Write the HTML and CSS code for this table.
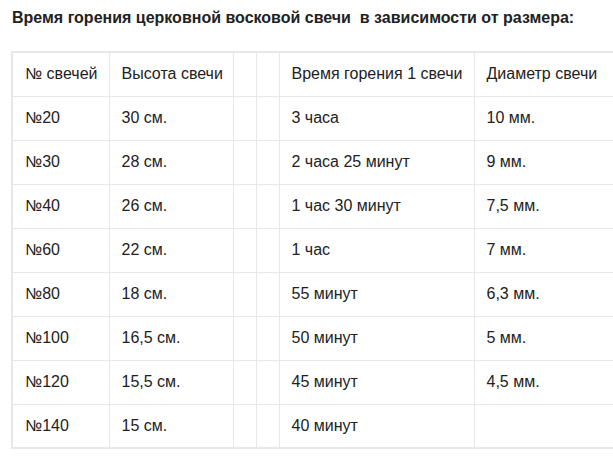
FILE: index.html
```html
<!DOCTYPE html>
<html lang="ru">
<head>
<meta charset="utf-8">
<link rel="stylesheet" href="styles.css">
</head>
<body>
<p class="title">Время горения церковной восковой свечи &nbsp;в зависимости от размера:</p>
<table class="candles">
<colgroup>
<col class="c1"><col class="c2"><col class="c3"><col class="c4"><col class="c5"><col class="c6">
</colgroup>
<tr><td>№ свечей</td><td>Высота свечи</td><td></td><td></td><td>Время горения 1 свечи</td><td>Диаметр свечи</td></tr>
<tr><td>№20</td><td>30 см.</td><td></td><td></td><td>3 часа</td><td>10 мм.</td></tr>
<tr><td>№30</td><td>28 см.</td><td></td><td></td><td>2 часа 25 минут</td><td>9 мм.</td></tr>
<tr><td>№40</td><td>26 см.</td><td></td><td></td><td>1 час 30 минут</td><td>7,5 мм.</td></tr>
<tr><td>№60</td><td>22 см.</td><td></td><td></td><td>1 час</td><td>7 мм.</td></tr>
<tr><td>№80</td><td>18 см.</td><td></td><td></td><td>55 минут</td><td>6,3 мм.</td></tr>
<tr><td>№100</td><td>16,5 см.</td><td></td><td></td><td>50 минут</td><td>5 мм.</td></tr>
<tr><td>№120</td><td>15,5 см.</td><td></td><td></td><td>45 минут</td><td>4,5 мм.</td></tr>
<tr><td>№140</td><td>15 см.</td><td></td><td></td><td>40 минут</td><td></td></tr>
</table>
</body>
</html>
```
FILE: styles.css
```css
html, body {
  margin: 0;
  padding: 0;
  background: #fff;
}
body {
  font-family: "Liberation Sans", Arial, sans-serif;
  color: #222;
  overflow: hidden;
}
.title {
  margin: 0;
  padding: 9px 0 0 12px;
  font-size: 16px;
  font-weight: bold;
  line-height: 18px;
}
.candles {
  margin: 24px 0 0 11px;
  border-collapse: collapse;
  table-layout: fixed;
  width: 604px;
  border: 2px solid #e8e8e8;
  font-size: 16px;
}
.candles td {
  border: 1px solid #e8e8e8;
  height: 44px;
  padding: 0 12px;
  box-sizing: border-box;
  white-space: nowrap;
  vertical-align: middle;
}
.c1 { width: 97px; }
.c2 { width: 124px; }
.c3 { width: 23px; }
.c4 { width: 23px; }
.c5 { width: 195px; }
.c6 { width: 142px; }
```
